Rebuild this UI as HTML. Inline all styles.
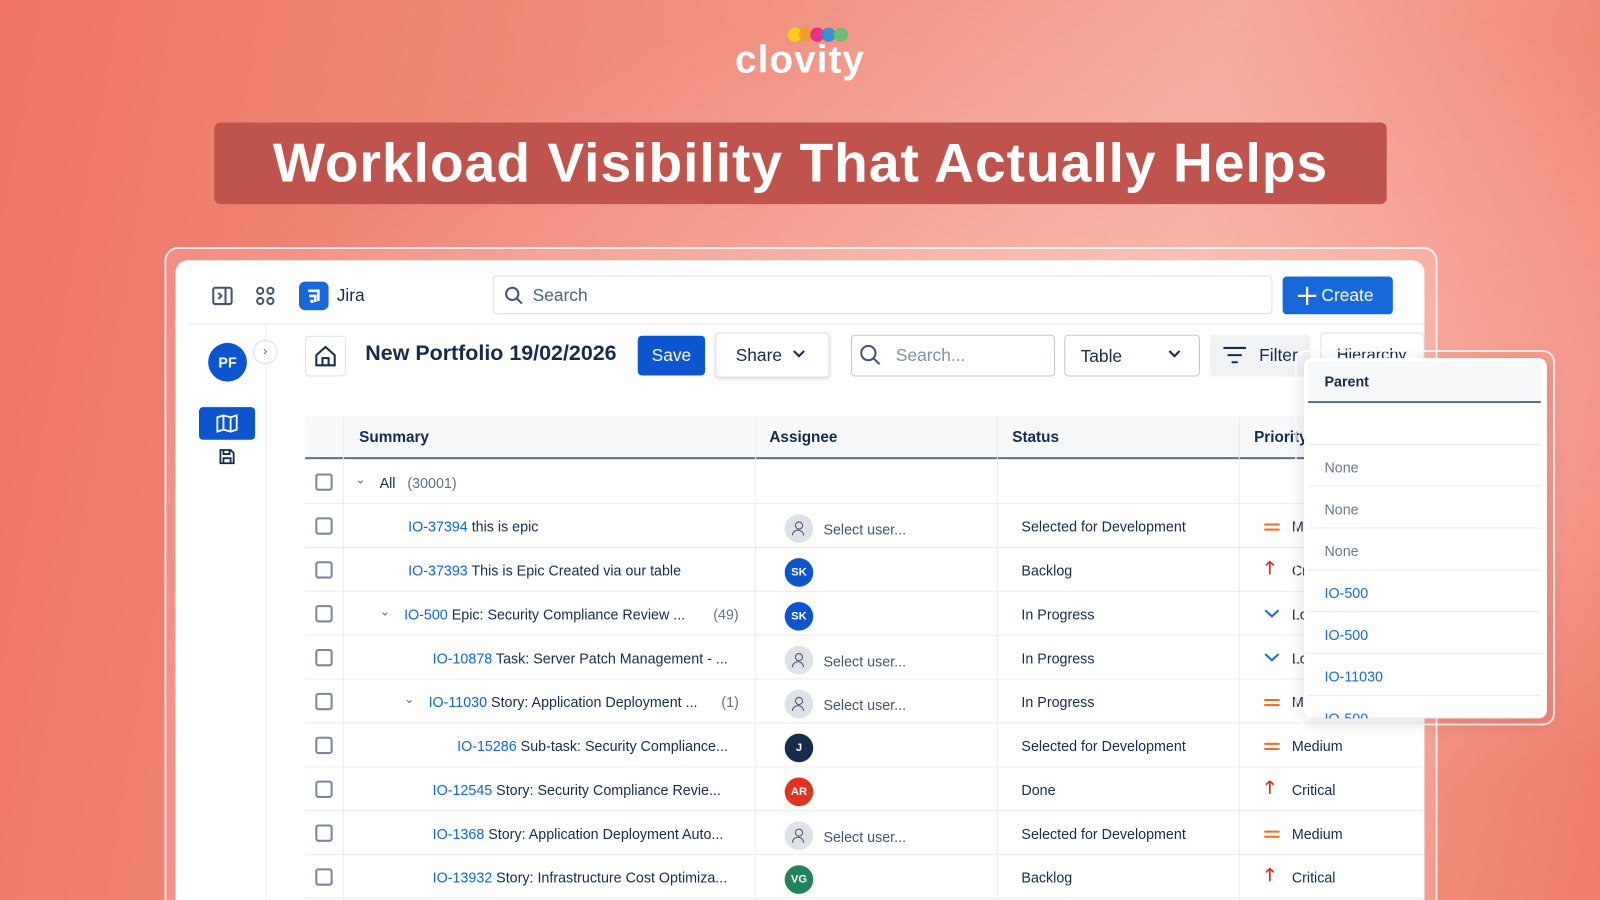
<!DOCTYPE html>
<html><head><meta charset="utf-8"><style>
*{box-sizing:border-box;margin:0;padding:0}
html,body{width:1600px;height:900px;overflow:hidden}
body{font-family:"Liberation Sans",sans-serif;background:linear-gradient(100deg,#ee7565 0%,#f29283 45%,#f6aa9b 70%,#f07c6c 100%)}
#s{position:absolute;left:0;top:0;width:1568px;height:882px;overflow:hidden;transform:scale(1.0204);transform-origin:0 0}
.a{position:absolute}
.glow{background:radial-gradient(ellipse at 70% 45%,rgba(255,200,190,.55),rgba(255,200,190,0) 60%);left:0;top:0;width:1568px;height:882px}
.banner{left:210px;top:120px;width:1149px;height:80px;background:#c0544c;border-radius:6px;color:#fff;font-weight:bold;font-size:54px;text-align:center;line-height:80px;letter-spacing:1px}
.frame{left:161px;top:242px;width:1248px;height:640px;border:2px solid rgba(255,255,255,.8);border-bottom:none;border-radius:14px 14px 0 0;background:rgba(255,255,255,.15)}
.card{left:172px;top:255px;width:1224px;height:627px;background:#fff;border-radius:12px 12px 0 0;overflow:hidden}
.t{color:#172b4d;font-size:15px;white-space:nowrap}
.btn{border:1px solid #dfe1e6;border-radius:4px;background:#fff}
.row{position:absolute;left:127px;width:1097px;height:43px;border-bottom:1px solid #ebecf0}
.cb{position:absolute;left:10px;top:13px;width:17px;height:17px;border:2px solid #7a869a;border-radius:3px}
.k{color:#0c66e4}
.av{position:absolute;left:470px;top:10px;width:28px;height:28px;border-radius:50%;color:#fff;font-size:11px;font-weight:bold;text-align:center;line-height:28px}
.gr{background:#dfe1e6}
.gr::after{content:"";position:absolute;left:10px;top:7px;width:6px;height:6px;border:1.6px solid #44546f;border-radius:50%}
.gr::before{content:"";position:absolute;left:7px;top:15px;width:10px;height:5px;border:1.6px solid #44546f;border-bottom:none;border-radius:6px 6px 0 0}
.up{position:absolute;left:941px;top:11px;color:#e2231a;font-weight:bold;font-size:17px;line-height:17px}
.pop{left:1269px;top:343px;width:255px;height:368px;border:2px solid rgba(255,255,255,.8);border-radius:12px}
.pin{left:1278px;top:351px;width:238px;height:353px;background:#fff;border-radius:8px;overflow:hidden;box-shadow:0 4px 20px rgba(0,0,0,.12)}
.pr{position:absolute;left:4px;width:228px;height:41px;border-bottom:1px solid #ebecf0;font-size:14px;padding:14px 0 0 16px;color:#6b778c}
</style></head><body><div id="s">
<div class="a glow"></div>
<div class="a" style="left:772px;top:27px;width:14px;height:14px;border-radius:50%;background:#f7cf1c"></div>
<div class="a" style="left:783px;top:27px;width:14px;height:14px;border-radius:50%;background:#f39b2a;opacity:.9"></div>
<div class="a" style="left:794px;top:27px;width:14px;height:14px;border-radius:50%;background:#e8238a;opacity:.9"></div>
<div class="a" style="left:805px;top:27px;width:14px;height:14px;border-radius:50%;background:#2a8fd8;opacity:.9"></div>
<div class="a" style="left:817px;top:27px;width:14px;height:14px;border-radius:50%;background:#5cc36e;opacity:.9"></div>
<div class="a" style="left:714px;top:38px;width:140px;font-size:38px;font-weight:bold;color:#fff;letter-spacing:1px;text-align:center">clovity</div>
<div class="a banner">Workload Visibility That Actually Helps</div>
<div class="a frame"></div>
<div class="a card">
 <svg class="a" style="left:35px;top:25px" width="22" height="20" viewBox="0 0 22 20" fill="none" stroke="#44546f" stroke-width="2"><rect x="2" y="2" width="18" height="16" rx="2"/><path d="M14 2v16M7 7l3 3-3 3"/></svg>
 <svg class="a" style="left:78px;top:25px" width="20" height="20" viewBox="0 0 20 20" fill="none" stroke="#44546f" stroke-width="2"><circle cx="5" cy="5" r="3"/><circle cx="15" cy="5" r="3"/><circle cx="5" cy="15" r="3"/><circle cx="15" cy="15" r="3"/></svg>
 <div class="a" style="left:121px;top:21px;width:29px;height:28px;background:#1868db;border-radius:6px"></div>
 <svg class="a" style="left:121px;top:21px" width="29" height="28" viewBox="0 0 29 28" fill="none" stroke="#fff" stroke-width="2.5"><path d="M9 9h10v10M10 14h6v6M11 19h2v2"/></svg>
 <div class="a t" style="left:158px;top:25px;font-size:17px">Jira</div>
 <div class="a btn" style="left:311px;top:15px;width:764px;height:38px;border-color:#dcdfe4"></div>
 <svg class="a" style="left:322px;top:25px" width="19" height="19" viewBox="0 0 19 19" fill="none" stroke="#44546f" stroke-width="2"><circle cx="8" cy="8" r="6"/><path d="M12.5 12.5l5 5"/></svg>
 <div class="a" style="left:350px;top:25px;font-size:17px;color:#505f79">Search</div>
 <div class="a" style="left:1085px;top:16px;width:108px;height:37px;background:#1868db;border-radius:4px;color:#fff;font-size:17px;line-height:37px;padding-left:38px">Create</div>
 <svg class="a" style="left:1099px;top:25px" width="20" height="20" viewBox="0 0 20 20" stroke="#fff" stroke-width="2.2"><path d="M10 1v18M1 10h18"/></svg>
 <div class="a" style="left:13px;top:62px;width:1211px;height:1px;background:#ebecf0"></div>
 <div class="a" style="left:88px;top:63px;width:1px;height:564px;background:#ebecf0"></div>
 <div class="a" style="left:32px;top:81px;width:38px;height:38px;border-radius:50%;background:#0c55cf;color:#fff;font-weight:bold;font-size:14px;text-align:center;line-height:38px">PF</div>
 <div class="a" style="left:76px;top:78px;width:24px;height:24px;border-radius:50%;border:1px solid #dfe1e6;background:#fff;font-size:12px;color:#44546f;text-align:center;line-height:21px">›</div>
 <div class="a" style="left:23px;top:144px;width:55px;height:32px;background:#0c55cf;border-radius:4px"></div>
 <svg class="a" style="left:40px;top:151px" width="21" height="18" viewBox="0 0 21 18" fill="none" stroke="#fff" stroke-width="1.8"><path d="M1 3l6-2 7 2 6-2v14l-6 2-7-2-6 2zM7 1v14M14 3v14"/></svg>
 <svg class="a" style="left:42px;top:184px" width="17" height="17" viewBox="0 0 17 17" fill="none" stroke="#172b4d" stroke-width="1.8"><path d="M2 2h10l3 3v10H2zM5 2v4h6V2M5 15v-5h7v5"/></svg>
 <div class="a btn" style="left:127px;top:74px;width:40px;height:40px"></div>
 <svg class="a" style="left:136px;top:83px" width="22" height="22" viewBox="0 0 22 22" fill="none" stroke="#172b4d" stroke-width="2"><path d="M2 10L11 2l9 8v10H2zM8 20v-7h6v7"/></svg>
 <div class="a" style="left:186px;top:80px;font-size:21px;font-weight:bold;color:#172b4d">New Portfolio 19/02/2026</div>
 <div class="a" style="left:453px;top:74px;width:66px;height:39px;background:#0c55cf;border-radius:4px;color:#fff;font-size:17px;text-align:center;line-height:39px">Save</div>
 <div class="a btn" style="left:529px;top:71px;width:112px;height:44px;box-shadow:0 1px 3px rgba(0,0,0,.15);font-size:17px;color:#172b4d;padding:12px 0 0 19px">Share</div>
 <svg class="a" style="left:604px;top:87px" width="14" height="10" viewBox="0 0 14 10" fill="none" stroke="#172b4d" stroke-width="2"><path d="M2 2l5 5 5-5"/></svg>
 <div class="a btn" style="left:662px;top:73px;width:200px;height:41px;border-color:#c1c7d0"></div>
 <svg class="a" style="left:671px;top:83px" width="20" height="20" viewBox="0 0 20 20" fill="none" stroke="#44546f" stroke-width="2"><circle cx="8" cy="8" r="7"/><path d="M13 13l6 6"/></svg>
 <div class="a" style="left:706px;top:84px;font-size:17px;color:#8590a2">Search...</div>
 <div class="a btn" style="left:871px;top:73px;width:133px;height:41px;border-color:#c1c7d0;font-size:17px;color:#172b4d;padding:11px 0 0 15px">Table</div>
 <svg class="a" style="left:972px;top:87px" width="14" height="10" viewBox="0 0 14 10" fill="none" stroke="#172b4d" stroke-width="2"><path d="M2 2l5 5 5-5"/></svg>
 <div class="a" style="left:1014px;top:73px;width:98px;height:41px;background:#f1f2f4;border-radius:4px;font-size:17px;color:#172b4d;padding:11px 0 0 48px">Filter</div>
 <svg class="a" style="left:1026px;top:84px" width="24" height="18" viewBox="0 0 24 18" stroke="#172b4d" stroke-width="2"><path d="M1 2h22M5 9h14M9 16h6"/></svg>
 <div class="a btn" style="left:1122px;top:71px;width:102px;height:44px;font-size:16px;color:#172b4d;padding:13px 0 0 15px;overflow:hidden;white-space:nowrap">Hierarchy</div>
 <div class="a" style="left:127px;top:153px;width:1097px;height:42px;background:#f7f8f9;border-bottom:2px solid #626f86"></div>
 <div class="a" style="left:164px;top:153px;width:1px;height:474px;background:#ebecf0"></div>
 <div class="a" style="left:568px;top:153px;width:1px;height:474px;background:#ebecf0"></div>
 <div class="a" style="left:805px;top:153px;width:1px;height:474px;background:#ebecf0"></div>
 <div class="a" style="left:1042px;top:153px;width:1px;height:474px;background:#ebecf0"></div>
 <div class="a t" style="left:180px;top:165px;font-weight:bold">Summary</div>
 <div class="a t" style="left:582px;top:165px;font-weight:bold">Assignee</div>
 <div class="a t" style="left:820px;top:165px;font-weight:bold">Status</div>
 <div class="a t" style="left:1057px;top:165px;font-weight:bold">Priority</div>

 <div class="row" style="top:196px"><div class="cb"></div><div class="a t" style="left:49px;top:12px;font-size:12px;color:#626f86">⌄</div><div class="a t" style="left:73px;top:14px;font-size:14px">All <span style="color:#626f86">&nbsp;&nbsp;(30001)</span></div></div>

 <div class="row" style="top:239px"><div class="cb"></div><div class="a t" style="left:101px;top:14px;font-size:14px"><span class="k">IO-37394</span> this is epic</div><div class="av gr"></div><div class="a t" style="left:508px;top:17px;font-size:14px;color:#44546f">Select user...</div><div class="a t" style="left:702px;top:14px;font-size:14px">Selected for Development</div><div class="a" style="left:940px;top:19px;width:15px;height:2px;background:#f56a1c;box-shadow:0 5px 0 #f56a1c"></div><div class="a t" style="left:967px;top:14px;font-size:14px">Medium</div></div>

 <div class="row" style="top:282px"><div class="cb"></div><div class="a t" style="left:101px;top:14px;font-size:14px"><span class="k">IO-37393</span> This is Epic Created via our table</div><div class="av" style="background:#0c55cf">SK</div><div class="a t" style="left:702px;top:14px;font-size:14px">Backlog</div><div class="up">🡑</div><div class="a t" style="left:967px;top:14px;font-size:14px">Critical</div></div>

 <div class="row" style="top:325px"><div class="cb"></div><div class="a t" style="left:73px;top:12px;font-size:12px;color:#626f86">⌄</div><div class="a t" style="left:97px;top:14px;font-size:14px"><span class="k">IO-500</span> Epic: Security Compliance Review ...</div><div class="a t" style="left:400px;top:14px;font-size:14px;color:#626f86">(49)</div><div class="av" style="background:#0c55cf">SK</div><div class="a t" style="left:702px;top:14px;font-size:14px">In Progress</div><svg class="a" style="left:940px;top:17px" width="15" height="9" viewBox="0 0 15 9" fill="none" stroke="#1868db" stroke-width="2"><path d="M1 1l6.5 6 6.5-6"/></svg><div class="a t" style="left:967px;top:14px;font-size:14px">Low</div></div>

 <div class="row" style="top:368px"><div class="cb"></div><div class="a t" style="left:125px;top:14px;font-size:14px"><span class="k">IO-10878</span> Task: Server Patch Management - ...</div><div class="av gr"></div><div class="a t" style="left:508px;top:17px;font-size:14px;color:#44546f">Select user...</div><div class="a t" style="left:702px;top:14px;font-size:14px">In Progress</div><svg class="a" style="left:940px;top:17px" width="15" height="9" viewBox="0 0 15 9" fill="none" stroke="#1868db" stroke-width="2"><path d="M1 1l6.5 6 6.5-6"/></svg><div class="a t" style="left:967px;top:14px;font-size:14px">Low</div></div>

 <div class="row" style="top:411px"><div class="cb"></div><div class="a t" style="left:97px;top:12px;font-size:12px;color:#626f86">⌄</div><div class="a t" style="left:121px;top:14px;font-size:14px"><span class="k">IO-11030</span> Story: Application Deployment ...</div><div class="a t" style="left:408px;top:14px;font-size:14px;color:#626f86">(1)</div><div class="av gr"></div><div class="a t" style="left:508px;top:17px;font-size:14px;color:#44546f">Select user...</div><div class="a t" style="left:702px;top:14px;font-size:14px">In Progress</div><div class="a" style="left:940px;top:19px;width:15px;height:2px;background:#f56a1c;box-shadow:0 5px 0 #f56a1c"></div><div class="a t" style="left:967px;top:14px;font-size:14px">Medium</div></div>

 <div class="row" style="top:454px"><div class="cb"></div><div class="a t" style="left:149px;top:14px;font-size:14px"><span class="k">IO-15286</span> Sub-task: Security Compliance...</div><div class="av" style="background:#172b4d">J</div><div class="a t" style="left:702px;top:14px;font-size:14px">Selected for Development</div><div class="a" style="left:940px;top:19px;width:15px;height:2px;background:#f56a1c;box-shadow:0 5px 0 #f56a1c"></div><div class="a t" style="left:967px;top:14px;font-size:14px">Medium</div></div>

 <div class="row" style="top:497px"><div class="cb"></div><div class="a t" style="left:125px;top:14px;font-size:14px"><span class="k">IO-12545</span> Story: Security Compliance Revie...</div><div class="av" style="background:#e2341d">AR</div><div class="a t" style="left:702px;top:14px;font-size:14px">Done</div><div class="up">🡑</div><div class="a t" style="left:967px;top:14px;font-size:14px">Critical</div></div>

 <div class="row" style="top:540px"><div class="cb"></div><div class="a t" style="left:125px;top:14px;font-size:14px"><span class="k">IO-1368</span> Story: Application Deployment Auto...</div><div class="av gr"></div><div class="a t" style="left:508px;top:17px;font-size:14px;color:#44546f">Select user...</div><div class="a t" style="left:702px;top:14px;font-size:14px">Selected for Development</div><div class="a" style="left:940px;top:19px;width:15px;height:2px;background:#f56a1c;box-shadow:0 5px 0 #f56a1c"></div><div class="a t" style="left:967px;top:14px;font-size:14px">Medium</div></div>

 <div class="row" style="top:583px"><div class="cb"></div><div class="a t" style="left:125px;top:14px;font-size:14px"><span class="k">IO-13932</span> Story: Infrastructure Cost Optimiza...</div><div class="av" style="background:#1f845a">VG</div><div class="a t" style="left:702px;top:14px;font-size:14px">Backlog</div><div class="up">🡑</div><div class="a t" style="left:967px;top:14px;font-size:14px">Critical</div></div>
</div>
<div class="a pop"></div>
<div class="a pin">
 <div class="a" style="left:4px;top:3px;width:228px;height:41px;background:#f7f8f9;border-bottom:2px solid #626f86;font-size:14px;font-weight:bold;color:#172b4d;padding:12px 0 0 16px">Parent</div>
 <div class="pr" style="top:44px;height:41px"></div>
 <div class="pr" style="top:85px">None</div>
 <div class="pr" style="top:126px">None</div>
 <div class="pr" style="top:167px">None</div>
 <div class="pr" style="top:208px;color:#1868db">IO-500</div>
 <div class="pr" style="top:249px;color:#1868db">IO-500</div>
 <div class="pr" style="top:290px;color:#1868db">IO-11030</div>
 <div class="pr" style="top:331px;height:22px;color:#1868db">IO-500</div>
</div>
</div></body></html>
